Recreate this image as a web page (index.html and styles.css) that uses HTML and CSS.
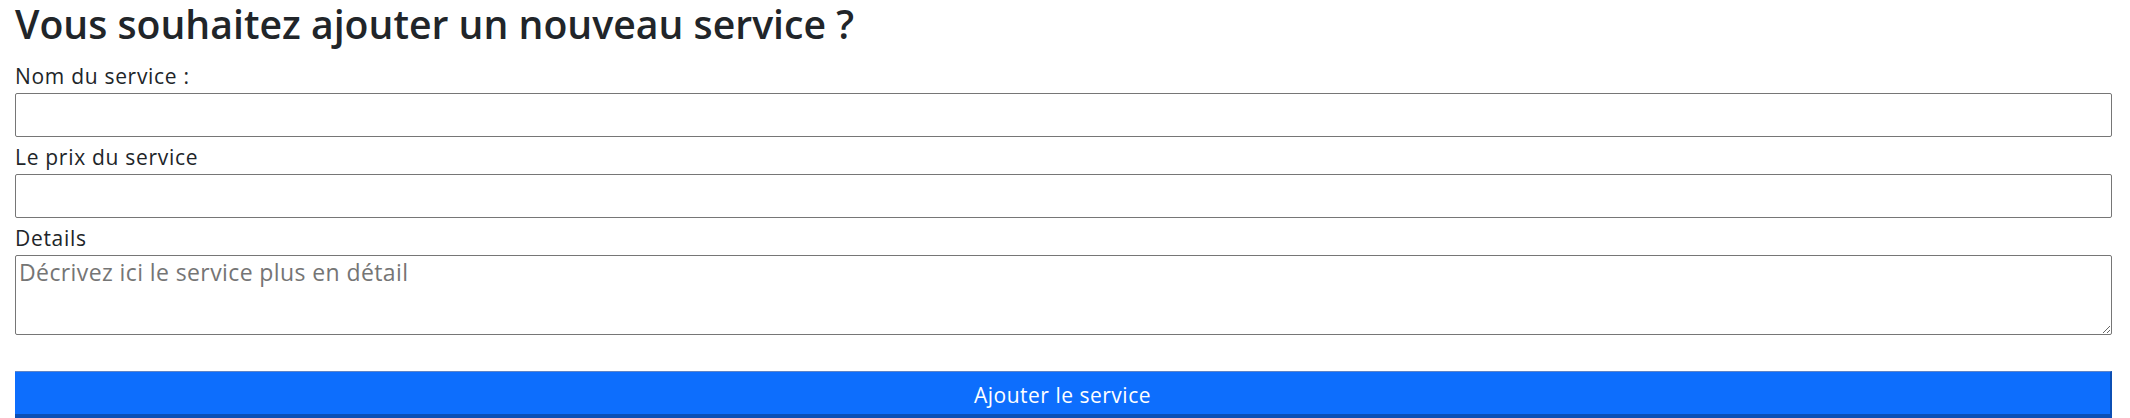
FILE: index.html
```html
<!DOCTYPE html>
<html lang="fr">
<head>
<meta charset="utf-8">
<title>Ajouter un service</title>
<link rel="stylesheet" href="styles.css">
</head>
<body>
<main class="page">
  <h1 class="title">Vous souhaitez ajouter un nouveau service ?</h1>
  <form class="form">
    <label class="label" for="nom">Nom du service :</label>
    <input class="field" id="nom" type="text">
    <label class="label" for="prix">Le prix du service</label>
    <input class="field" id="prix" type="text">
    <label class="label" for="details">Details</label>
    <textarea class="field area" id="details" placeholder="Décrivez ici le service plus en détail"></textarea>
    <button class="submit" type="button">Ajouter le service</button>
  </form>
</main>
</body>
</html>
```
FILE: styles.css
```css
html, body {
  margin: 0;
  padding: 0;
  background: #fff;
}
body {
  font-family: "Open Sans", "Noto Sans", sans-serif;
  color: #212529;
  font-size: 21px;
}
.page {
  padding: 0 18px 0 15px;
}
.title {
  margin: 0;
  font-size: 39.2px;
  font-weight: 600;
  letter-spacing: 0;
  line-height: 48px;
  color: #212529;
}
.form {
  display: flex;
  flex-direction: column;
  margin-top: 13px;
}
.label {
  display: block;
  font-size: 21px;
  letter-spacing: 0.7px;
  line-height: 30px;
  margin-bottom: 2px;
}
.field {
  box-sizing: border-box;
  width: 100%;
  height: 44px;
  margin: 0 0 5px 0;
  border: 1px solid #767676;
  border-radius: 2px;
  font-family: inherit;
  font-size: 21px;
  padding: 1px 3px;
  background: #fff;
}
.area {
  height: 80px;
  resize: vertical;
  margin-bottom: 36px;
  font-size: 23px;
  letter-spacing: 0.4px;
  line-height: 32px;
  padding: 0 3px;
}
.area::placeholder {
  color: #757575;
}
.submit {
  box-sizing: border-box;
  width: 100%;
  height: 47px;
  padding: 3px 0 0;
  background: #0d6efd;
  color: #fff;
  font-family: inherit;
  font-size: 21px;
  letter-spacing: 0.5px;
  border: none;
  border-top: 1px solid #5f84c4;
  border-right: 2px solid #0b4fb5;
  border-bottom: 4px solid #0b4fb5;
  line-height: 30px;
}
```
